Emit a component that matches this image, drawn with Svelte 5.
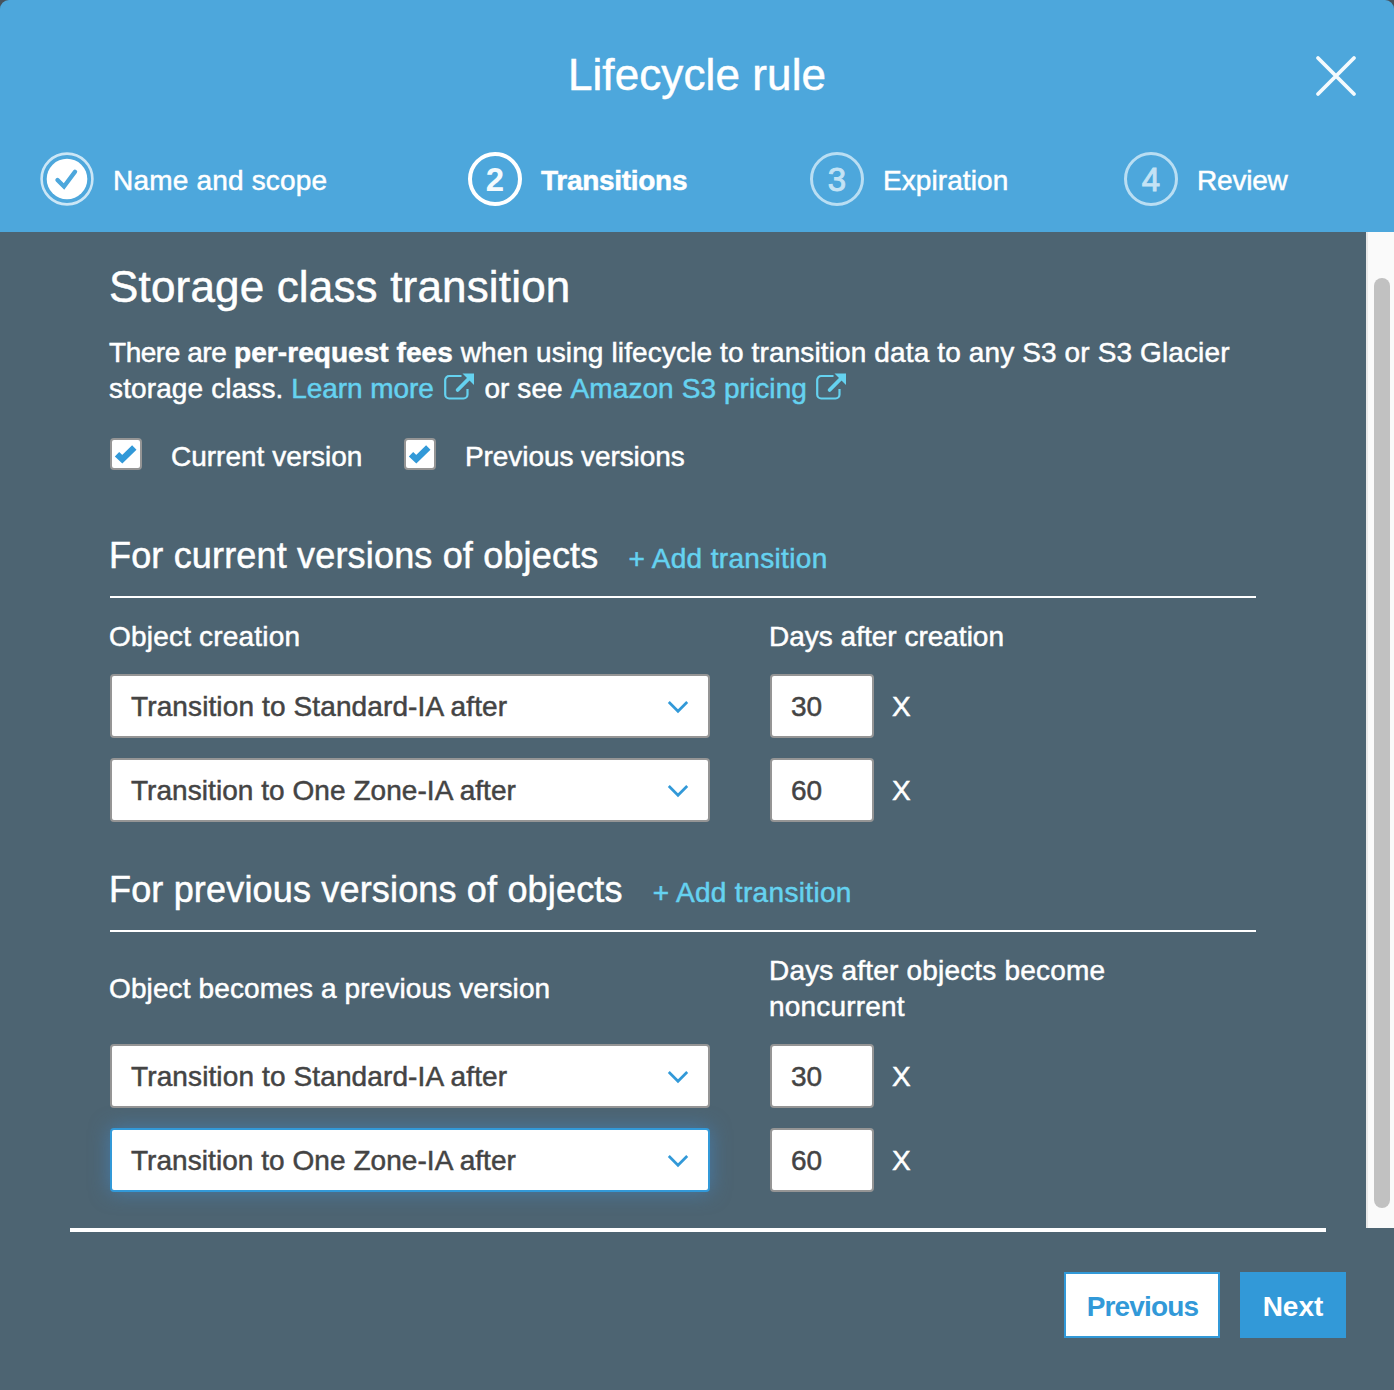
<script>
  const steps = [
    { label: 'Name and scope', state: 'done', cls: 'scope' },
    { label: 'Transitions', state: 'active', cls: 'transitions' },
    { label: 'Expiration', state: 'todo', cls: 'expiration' },
    { label: 'Review', state: 'todo', cls: 'review' }
  ];

  const sections = [
    {
      id: 'current',
      title: 'For current versions of objects',
      left: 'Object creation',
      right: 'Days after creation',
      rows: [
        { label: 'Transition to Standard-IA after', kind: 'standard', days: 30 },
        { label: 'Transition to One Zone-IA after', kind: 'zone', days: 60 }
      ]
    },
    {
      id: 'previous',
      title: 'For previous versions of objects',
      left: 'Object becomes a previous version',
      right: 'Days after objects become noncurrent',
      rows: [
        { label: 'Transition to Standard-IA after', kind: 'standard', days: 30 },
        { label: 'Transition to One Zone-IA after', kind: 'zone', days: 60, focused: true }
      ]
    }
  ];
</script>

{#snippet external()}
  <svg class="external" width="30" height="27" viewBox="0 0 30 27">
    <path d="M17.500 3H5.200a4 4 0 0 0-4 4v14.500a4 4 0 0 0 4 4h14.300a4 4 0 0 0 4-4V16" fill="none" stroke="currentColor" stroke-width="2.200" />
    <path d="M13.600 17 25 5.500" fill="none" stroke="currentColor" stroke-width="3.800" stroke-linecap="round" />
    <path d="M18.500 .5h11.500v11.500z" fill="currentColor" />
  </svg>
{/snippet}

{#snippet checkbox()}
  <span class="box">
    <svg width="28" height="28" viewBox="0 0 28 28">
      <path d="M5 14.200 10.300 19.200 22.300 7.600" fill="none" stroke="#3299d8" stroke-width="6.300" />
    </svg>
  </span>
{/snippet}

<div class="dialog">
  <header>
    <div class="titlebar">
      <h1>Lifecycle rule</h1>
      <svg class="close" width="42" height="42" viewBox="0 0 42 42">
        <path d="M3 3 39 39M39 3 3 39" stroke="#f4fafd" stroke-width="3.800" stroke-linecap="round" />
      </svg>
    </div>
    <nav>
      {#each steps as step, i}
        <div class="step {step.cls} {step.state}">
          {#if step.state === 'done'}
            <svg class="badge" width="54" height="54" viewBox="0 0 54 54">
              <circle cx="27" cy="27" r="25.400" fill="none" stroke="#cbe6f6" stroke-width="2.600" />
              <circle cx="27" cy="27" r="20.300" fill="#fff" />
              <path d="M17.500 28 24 34.500 35 19.800" fill="none" stroke="#4da7dc" stroke-width="4.400" stroke-linecap="round" />
            </svg>
          {:else}
            <span class="badge num">{i + 1}</span>
          {/if}
          <span class="label">{step.label}</span>
        </div>
      {/each}
    </nav>
  </header>

  <div class="body">
    <main>
      <h2>Storage class transition</h2>
      <p class="intro">
        <span class="there">There are</span> <b>per-request fees</b> <span class="when">when using lifecycle to transition data to any S3 or S3 Glacier</span><br />
        <span class="when">storage class.</span> <a class="learn" href="#learn">Learn more {@render external()}</a>
        <span class="or">or see</span> <a class="pricing" href="#pricing">Amazon S3 pricing {@render external()}</a>
      </p>
      <div class="versions">
        <div class="option">{@render checkbox()}<span>Current version</span></div>
        <div class="option">{@render checkbox()}<span>Previous versions</span></div>
      </div>

      {#each sections as section}
        <section class={section.id}>
          <div class="heading">
            <h3>{section.title}</h3>
            <a href="#add">+ Add transition</a>
          </div>
          <div class="columns">
            <div class="left">{section.left}</div>
            <div class="right">{section.right}</div>
          </div>
          {#each section.rows as row}
            <div class="row">
              <div class="select {row.kind}" class:focused={row.focused}>
                <span>{row.label}</span>
                <svg width="22" height="14" viewBox="0 0 22 14">
                  <path d="M1.800 2 11 11.300 20.200 2" fill="none" stroke="#3299d8" stroke-width="2.700" />
                </svg>
              </div>
              <div class="days">{row.days}</div>
              <span class="remove">X</span>
            </div>
          {/each}
        </section>
      {/each}
    </main>
    <div class="track"><div class="thumb"></div></div>
  </div>

  <footer>
    <div class="rule"></div>
    <div class="actions">
      <button class="prev">Previous</button>
      <button class="next">Next</button>
    </div>
  </footer>
</div>

<style>
  :global(body) { background: #47525c; }
  * { box-sizing: border-box; }
  .dialog {
    width: 1394px;
    height: 1390px;
    display: flex;
    flex-direction: column;
    overflow: hidden;
    border-radius: 9px 9px 0 0;
    background: #4d6472;
    color: #fff;
    font: 28px/36px "Liberation Sans", Arial, sans-serif;
    -webkit-text-stroke: 0.5px currentColor;
    white-space: nowrap;
  }
  h1, h2, h3, p { margin: 0; font-weight: 400; }
  a { color: #65d2f0; text-decoration: none; }

  header { height: 232px; flex: none; background: #4da7dc; }
  .titlebar { display: grid; grid-template-columns: 1fr auto 1fr; align-items: center; height: 152px; padding: 0 37px; }
  h1 { grid-column: 2; font-size: 44px; line-height: 52px; letter-spacing: 0.1px; padding-bottom: 2px; }
  .close { justify-self: end; }
  nav { display: flex; padding-left: 40px; }
  .step { display: flex; align-items: center; flex: none; height: 54px; }
  .step.scope { width: 428px; letter-spacing: 0.19px; }
  .step.transitions { width: 342px; letter-spacing: -0.29px; }
  .step.expiration { width: 314px; letter-spacing: 0.08px; }
  .step.review { letter-spacing: -0.2px; }
  .badge { width: 54px; height: 54px; flex: none; margin-right: 19px; }
  .num { border: 3px solid #b9def3; border-radius: 50%; display: grid; place-items: center; color: #c4e3f5; font-size: 33px; padding-top: 2px; letter-spacing: 0; -webkit-text-stroke-width: 0.9px; }
  .active .num { border: 4px solid #fff; color: #f4fafd; font-weight: 700; -webkit-text-stroke-width: 0; }
  .label { padding-top: 3px; }
  .active .label { font-weight: 700; }

  .body { height: 996px; flex: none; display: flex; }
  main { flex: 1; padding: 29px 0 0 109px; }
  h2 { font-size: 44px; line-height: 52px; letter-spacing: 0.17px; }
  .intro { margin-top: 22px; height: 72px; }
  .there { letter-spacing: -0.46px; }
  .intro b { letter-spacing: 0.06px; }
  .when, .pricing { letter-spacing: 0.125px; }
  .pricing { letter-spacing: 0.08px; }
  .learn { letter-spacing: -0.06px; }
  .external { margin-left: 1px; vertical-align: -2px; }
  .learn .external { margin-left: 2px; }
  .or { margin-left: 3px; letter-spacing: 0.1px; }
  .versions { display: flex; margin-top: 30px; height: 40px; padding-left: 1px; }
  .option { display: flex; width: 294px; }
  .option + .option { letter-spacing: -0.08px; }
  .option span:last-child { padding-top: 2px; margin-left: 29px; }
  .box { display: flex; width: 32px; height: 32px; margin-top: 1px; border: 2px solid #959595; border-radius: 4px; background: #fff; }

  .heading { display: flex; align-items: baseline; width: 1146px; height: 66px; margin-left: 1px; border-bottom: 2px solid #fff; }
  h3 { font-size: 36px; line-height: 48px; margin-left: -1px; letter-spacing: 0.17px; }
  .heading a { margin-left: 30px; letter-spacing: 0.33px; }
  section.current { margin-top: 55px; }
  section.previous { margin-top: 44px; }
  .columns { display: flex; align-items: center; height: 76px; padding-top: 2px; }
  .previous .columns { height: 112px; }
  .left { width: 660px; letter-spacing: 0.2px; }
  .previous .left { letter-spacing: 0.12px; }
  .right { width: 400px; white-space: normal; }
  .previous .right { letter-spacing: 0.19px; }
  .row { display: flex; align-items: center; height: 64px; padding-left: 1px; }
  .row + .row { margin-top: 20px; }
  .select, .days { height: 64px; border: 2px solid #959595; border-radius: 4px; background: #fff; color: #444; display: flex; align-items: center; padding: 2px 19px 0; }
  .select { width: 600px; margin-right: 60px; justify-content: space-between; letter-spacing: 0.12px; }
  .select.zone { letter-spacing: 0.05px; }
  .focused { border-color: #3299d8; box-shadow: 0 0 20px rgba(66, 139, 202, 0.6); }
  .days { width: 104px; margin-right: 18px; }
  .remove { padding-top: 2px; }

  .track { width: 28px; height: 996px; border-left: 2px solid #e8e8e8; background: #fafafa; padding: 46px 0 0 6px; }
  .thumb { width: 16px; height: 930px; border-radius: 8px; background: #c1c1c1; }

  footer { flex: 1; }
  .rule { height: 4px; margin: 0 68px 0 70px; background: #fff; }
  .actions { display: flex; justify-content: flex-end; gap: 20px; padding: 40px 48px 0 0; }
  button { height: 66px; padding: 4px 0 0; border: 2px solid #3299d8; font: inherit; font-weight: 700; -webkit-text-stroke-width: 0; }
  .prev { width: 156px; padding-left: 1px; background: #fff; color: #3299d8; letter-spacing: -0.85px; }
  .next { width: 106px; background: #3299d8; color: #fff; }
</style>
